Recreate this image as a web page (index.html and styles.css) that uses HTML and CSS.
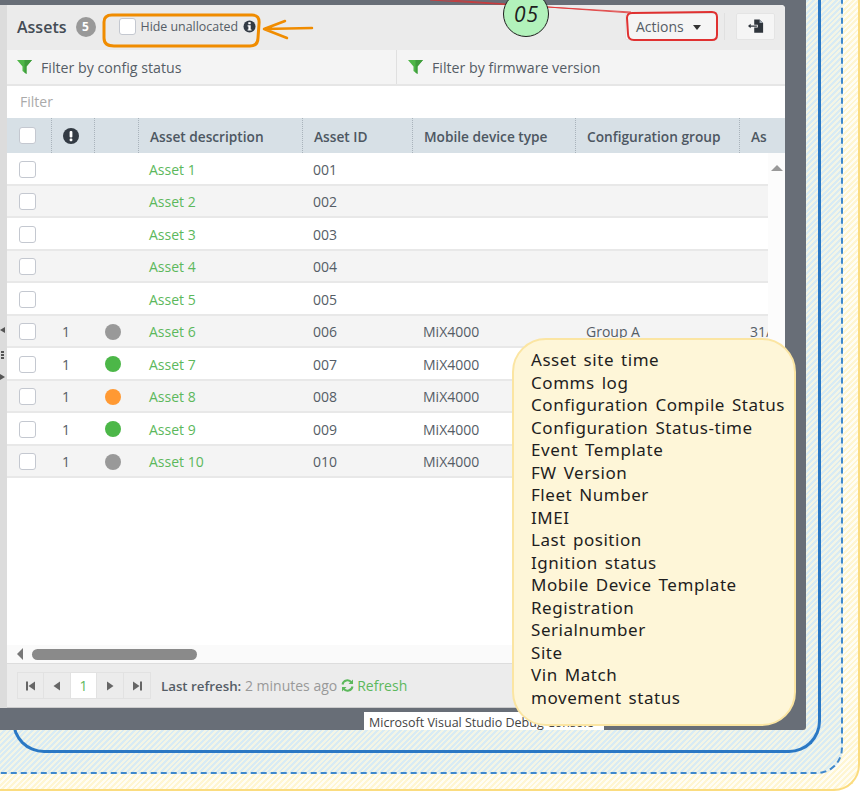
FILE: index.html
```html
<!DOCTYPE html>
<html lang="en">
<head>
    <meta charset="UTF-8">
    <title>Assets</title>
    <link rel="stylesheet" href="styles.css">
</head>
<body>
<div class="zone-yellow">
<div class="zone-blue">
<div class="zone-line">
<div class="frame">
    <div class="gutter">
        <svg width="7" height="60" viewBox="0 0 7 60"><path d="M0 3L5 0V6Z" fill="#555"/><rect x="1" y="24" width="3" height="2" fill="#555"/><rect x="1" y="27" width="3" height="2" fill="#555"/><rect x="1" y="30" width="3" height="2" fill="#555"/><path d="M0 47V53L5 50Z" fill="#555"/></svg>
    </div>
    <section class="panel">
        <header class="titlebar">
            <h1>Assets</h1>
            <span class="badge">5</span>
            <label class="hide-check">
                <span class="check"></span>
                <span>Hide unallocated</span>
                <svg width="13" height="13" viewBox="0 0 13 13"><circle cx="6.5" cy="6.5" r="6" fill="#333b44"/><rect x="5.3" y="2.2" width="2.4" height="2" fill="#fff"/><path d="M4.6 5.3H7.7V9.4H8.6V10.6H4.6V9.4H5.4V6.5H4.6Z" fill="#fff"/></svg>
            </label>
            <div class="title-actions">
                <button class="btn btn-actions">Actions <i class="caret"></i></button>
                <span class="sep"></span>
                <button class="btn btn-export">
                    <svg width="16" height="15" viewBox="0 0 18 16"><path d="M7 0H13L17 4V15H7V9H11V6H7Z" fill="#2f353c"/><path d="M13 0L17 4H13Z" fill="#9aa3ad"/><path d="M0 7.5L3 5V6.8H10V8.2H3V10Z" fill="#2f353c"/></svg>
                </button>
            </div>
        </header>

        <div class="filters">
            <div class="filter-cell filter-cell-a">
                <svg class="funnel" width="15" height="14" viewBox="0 0 15 14"><path d="M0 0H15L9.5 6.5V14L5.5 11V6.5Z" fill="#4fb648"/><path d="M7.5 0H15L9.5 6.5V14L7.5 12.5Z" fill="#3f9c3c"/></svg>
                Filter by config status
            </div>
            <div class="filter-cell">
                <svg class="funnel" width="15" height="14" viewBox="0 0 15 14"><path d="M0 0H15L9.5 6.5V14L5.5 11V6.5Z" fill="#4fb648"/><path d="M7.5 0H15L9.5 6.5V14L7.5 12.5Z" fill="#3f9c3c"/></svg>
                Filter by firmware version
            </div>
        </div>

        <div class="filter-input">Filter</div>

        <div class="row row-head">
            <div class="cell"><span class="check"></span></div>
            <div class="cell"><svg width="16" height="16" viewBox="0 0 16 16"><circle cx="8" cy="8" r="8" fill="#333b44"/><rect x="6.6" y="3" width="2.8" height="6.4" rx="1" fill="#fff"/><rect x="6.6" y="10.6" width="2.8" height="2.6" rx="1" fill="#fff"/></svg></div>
            <div class="cell"></div>
            <div class="cell">Asset description</div>
            <div class="cell">Asset ID</div>
            <div class="cell">Mobile device type</div>
            <div class="cell">Configuration group</div>
            <div class="cell">As</div>
        </div>

        <div class="table-body">
            <div class="rows">
                <div class="row"><div class="cell"><span class="check"></span></div><div class="cell"></div><div class="cell"></div><div class="cell link">Asset 1</div><div class="cell">001</div><div class="cell"></div><div class="cell"></div><div class="cell"></div></div>
                <div class="row row-alt"><div class="cell"><span class="check"></span></div><div class="cell"></div><div class="cell"></div><div class="cell link">Asset 2</div><div class="cell">002</div><div class="cell"></div><div class="cell"></div><div class="cell"></div></div>
                <div class="row"><div class="cell"><span class="check"></span></div><div class="cell"></div><div class="cell"></div><div class="cell link">Asset 3</div><div class="cell">003</div><div class="cell"></div><div class="cell"></div><div class="cell"></div></div>
                <div class="row row-alt"><div class="cell"><span class="check"></span></div><div class="cell"></div><div class="cell"></div><div class="cell link">Asset 4</div><div class="cell">004</div><div class="cell"></div><div class="cell"></div><div class="cell"></div></div>
                <div class="row"><div class="cell"><span class="check"></span></div><div class="cell"></div><div class="cell"></div><div class="cell link">Asset 5</div><div class="cell">005</div><div class="cell"></div><div class="cell"></div><div class="cell"></div></div>
                <div class="row row-alt"><div class="cell"><span class="check"></span></div><div class="cell">1</div><div class="cell"><i class="dot dot-grey"></i></div><div class="cell link">Asset 6</div><div class="cell">006</div><div class="cell">MiX4000</div><div class="cell">Group A</div><div class="cell">31/</div></div>
                <div class="row"><div class="cell"><span class="check"></span></div><div class="cell">1</div><div class="cell"><i class="dot dot-green"></i></div><div class="cell link">Asset 7</div><div class="cell">007</div><div class="cell">MiX4000</div><div class="cell"></div><div class="cell"></div></div>
                <div class="row row-alt"><div class="cell"><span class="check"></span></div><div class="cell">1</div><div class="cell"><i class="dot dot-orange"></i></div><div class="cell link">Asset 8</div><div class="cell">008</div><div class="cell">MiX4000</div><div class="cell"></div><div class="cell"></div></div>
                <div class="row"><div class="cell"><span class="check"></span></div><div class="cell">1</div><div class="cell"><i class="dot dot-green"></i></div><div class="cell link">Asset 9</div><div class="cell">009</div><div class="cell">MiX4000</div><div class="cell"></div><div class="cell"></div></div>
                <div class="row row-alt"><div class="cell"><span class="check"></span></div><div class="cell">1</div><div class="cell"><i class="dot dot-grey"></i></div><div class="cell link">Asset 10</div><div class="cell">010</div><div class="cell">MiX4000</div><div class="cell"></div><div class="cell"></div></div>
            </div>
            <div class="v-rail"><i class="arrow-up"></i></div>
        </div>

        <div class="h-scroll"><i class="arrow-left"></i><span class="h-thumb"></span></div>

        <footer class="pager-bar">
            <div class="pager">
                <span class="page-btn"><svg width="10" height="10" viewBox="0 0 10 10"><rect x="0" y="0.5" width="2" height="9" fill="#666"/><path d="M9 0.5V9.5L2.5 5Z" fill="#666"/></svg></span>
                <span class="page-btn"><svg width="8" height="10" viewBox="0 0 8 10"><path d="M7 0.5V9.5L0.5 5Z" fill="#666"/></svg></span>
                <span class="page-btn page-current">1</span>
                <span class="page-btn"><svg width="8" height="10" viewBox="0 0 8 10"><path d="M1 0.5V9.5L7.5 5Z" fill="#666"/></svg></span>
                <span class="page-btn"><svg width="10" height="10" viewBox="0 0 10 10"><path d="M1 0.5V9.5L7.5 5Z" fill="#666"/><rect x="8" y="0.5" width="2" height="9" fill="#666"/></svg></span>
            </div>
            <span class="refresh-text"><b>Last refresh:</b> <span class="muted">2 minutes ago</span></span>
            <span class="refresh-link">
                <svg width="13" height="13" viewBox="0 0 13 13" fill="none" stroke="#5cb85c" stroke-width="2"><path d="M1.5 5.5A5 5 0 0 1 10.5 3.5"/><path d="M11.5 7.5A5 5 0 0 1 2.5 9.5"/><path d="M12 0.5V5H7.5Z" fill="#5cb85c" stroke="none"/><path d="M1 12.5V8H5.5Z" fill="#5cb85c" stroke="none"/></svg>
                Refresh
            </span>
        </footer>
    </section>
</div>
</div>
</div>
</div>

<div class="taskbar-tip">Microsoft Visual Studio Debug Console</div>

<!-- sketch markup on top of the screenshot -->
<svg class="markup" width="863" height="793" viewBox="0 0 863 793" fill="none">
    <path d="M104 22Q104 15 112 15L252 15Q260 15 259 24L258 38Q258 46 250 46L114 46Q104 46 104 38Z" stroke="#f08c00" stroke-width="3"/>
    <path d="M312 28L264 29M264 29L285 21M264 29L287 38" stroke="#f08c00" stroke-width="2.5" stroke-linecap="round"/>
    <path d="M430 0L631 12M450 0L631 13" stroke="#e03131" stroke-width="0.8"/>
    <path d="M632 13L712 12Q717 12 717 17L717 35Q717 40 712 40L634 40Q628 40 628 34L627 18Q627 13 632 13Z" stroke="#e03131" stroke-width="2"/>
    <circle cx="526" cy="14" r="22.5" fill="#b2f2bb" stroke="#1e1e1e" stroke-width="1"/>
</svg>
<div class="step-no">05</div>

<aside class="note">
    <p>Asset site time</p>
    <p>Comms log</p>
    <p>Configuration Compile Status</p>
    <p>Configuration Status-time</p>
    <p>Event Template</p>
    <p>FW Version</p>
    <p>Fleet Number</p>
    <p>IMEI</p>
    <p>Last position</p>
    <p>Ignition status</p>
    <p>Mobile Device Template</p>
    <p>Registration</p>
    <p>Serialnumber</p>
    <p>Site</p>
    <p>Vin Match</p>
    <p>movement status</p>
</aside>
</body>
</html>
```

FILE: styles.css
```css
* { box-sizing: border-box; margin: 0; padding: 0 }
html, body { height: 793px; overflow: hidden; background: #fff }
body { position: relative; font-family: "Open Sans", sans-serif; font-size: 14px; color: #555d66 }

/* hatched canvas behind the screenshot */
.zone-yellow {
    width: 860px; height: 791px; padding: 0 15px 15px 0;
    border-right: 2px solid #fbdc7f; border-bottom: 2px solid #fbdc7f; border-bottom-right-radius: 26px;
    background: repeating-linear-gradient(-45deg, #fff6d2 0, #fff6d2 2px, #fffdf4 2px, #fffdf4 4px);
}
.zone-blue {
    height: 100%; padding: 0 20px 19px 0;
    border-right: 2px dashed #3f88cc; border-bottom: 2px dashed #3f88cc; border-bottom-right-radius: 26px;
    background: repeating-linear-gradient(-45deg, #d8ebf4 0, #d8ebf4 2px, #f3f5e6 2px, #f3f5e6 4px);
}
.zone-line {
    height: 100%; margin-left: 12px; padding: 0 12px 18px 0;
    border-left: 3px solid #2a78c4; border-right: 3px solid #2a78c4; border-bottom: 3px solid #2a78c4;
    border-radius: 0 0 32px 32px;
}
.frame {
    display: flex; height: 730px; margin-left: -15px; padding: 5px 21px 22px 0;
    background: #686e77; border-bottom-right-radius: 3px;
}

.gutter { width: 7px; padding-top: 322px; background: #dcdcdc }
.gutter svg { display: block }

.panel { flex: 1; display: flex; flex-direction: column; min-width: 0; background: #fff; border-top-right-radius: 4px; overflow: hidden }

.titlebar { display: flex; align-items: center; height: 45px; padding: 0 10px 2px 10px; background: #ebebeb; flex: none }
.titlebar h1 { font-size: 16px; font-weight: 600; color: #444c55 }
.badge { width: 20px; height: 20px; margin-left: 9px; border-radius: 50%; background: #999; color: #fff; font-size: 12px; font-weight: 700; line-height: 20px; text-align: center }
.hide-check { display: flex; align-items: center; margin-left: 23px; font-size: 12.4px; color: #555d66 }
.hide-check .check { margin-right: 5px }
.hide-check svg { margin-left: 5px }
.title-actions { display: flex; align-items: center; margin-left: auto }
.btn { height: 27px; border: 1px solid #e4e4e4; border-radius: 2px; background: #f5f5f5; font-family: inherit; font-size: 14px; color: #555d66 }
.btn-actions { width: 92px; padding-left: 10px; text-align: left }
.caret { display: inline-block; margin-left: 6px; vertical-align: 2px; border-top: 5px solid #333; border-left: 4.5px solid transparent; border-right: 4.5px solid transparent }
.sep { width: 1px; height: 27px; margin: 0 11px 0 7px; background: #e0e0e0 }
.btn-export { width: 39px; display: flex; align-items: center; justify-content: center }

.check { display: block; width: 17px; height: 17px; background: #fff; border: 1px solid #c4c8d0; border-radius: 3px }

.filters { display: flex; height: 36px; flex: none; background: #f4f4f4; border-bottom: 2px solid #e6e6e6 }
.filter-cell { display: flex; align-items: center; padding-left: 11px; font-size: 14.2px; color: #555d66; flex: 1 }
.filter-cell-a { flex: none; width: 390px; padding-left: 10px; border-right: 1px solid #e0e0e0 }
.funnel { margin-right: 9px }

.filter-input { height: 32px; flex: none; padding: 6px 0 0 13px; color: #aaa; font-size: 14px }

.row { display: grid; grid-template-columns: 44px 43px 44px 164px 110px 163px 164px 46px; height: 32.5px; border-bottom: 2px solid #e8e8e8; overflow: hidden; white-space: nowrap }
.cell { display: flex; align-items: center; padding-left: 11px; min-width: 0 }
.cell:first-child { padding-left: 12px }
.rows .cell { padding-top: 2px }
.row-head { height: 35px; flex: none; width: 100%; background: #d7e0e6; border: none; font-size: 13.7px; font-weight: 600; color: #4d5762 }
.row-head .cell:nth-child(n+4) { padding-top: 2px }
.row-head .cell + .cell { border-left: 1px dotted #a9b3bb }
.row-alt { background: #f4f4f4 }
.link { color: #5cb85c }

.dot { display: block; width: 16px; height: 16px; border-radius: 50% }
.dot-grey { background: #999 }
.dot-green { background: #4cb748 }
.dot-orange { background: #ff9933 }

.table-body { flex: 1; display: flex; min-height: 0; overflow: hidden }
.rows { width: 761px; flex: none; overflow: hidden }
.rows .row { width: 761px; grid-template-columns: 44px 43px 44px 164px 110px 163px 164px 29px }
.v-rail { flex: 1; padding: 12px 0 0 3px; background: #fcfcfc }
.arrow-up { display: block; width: 0; border-bottom: 6px solid #999; border-left: 6px solid transparent; border-right: 6px solid transparent }

.h-scroll { display: flex; align-items: center; height: 18px; flex: none; padding-left: 10px; background: #fafafa }
.arrow-left { display: block; border-right: 6px solid #777; border-top: 6px solid transparent; border-bottom: 6px solid transparent }
.h-thumb { display: block; width: 165px; height: 11px; margin-left: 9px; border-radius: 6px; background: #8a8a8a }

.pager-bar { display: flex; align-items: center; height: 45px; flex: none; padding-left: 10px; background: #ececec; border-top: 1px solid #ddd; border-bottom: 1px solid #ccc; font-size: 14px }
.pager { display: flex; height: 27px; border: 1px solid #e2e2e2; margin-right: 10px }
.page-btn { display: flex; align-items: center; justify-content: center; width: 26.4px; border-right: 1px solid #e2e2e2 }
.page-btn:last-child { border-right: none }
.page-current { background: #fff; color: #5cb85c }
.refresh-text b { font-size: 13.3px; font-weight: 600 }
.muted { color: #999 }
.refresh-link { display: flex; align-items: center; gap: 3px; margin-left: 4px; color: #5cb85c }

/* things lying over the screenshot */
.taskbar-tip { position: absolute; left: 364px; top: 712px; width: 240px; height: 18px; padding-left: 5px; background: #fff; font-size: 12.5px; line-height: 21px; color: #444; white-space: nowrap; overflow: hidden }
.markup { position: absolute; left: 0; top: 0 }
.step-no { position: absolute; left: 514px; top: 0; font-size: 21px; font-style: italic; color: #1e1e1e; letter-spacing: 1px }
.note {
    position: absolute; left: 512px; top: 338px; width: 284px; height: 388px; padding: 9px 0 0 17px;
    background: #fef6d8; border: 2px solid #fbe5a2; border-radius: 34px;
    font-family: "Noto Sans", sans-serif; font-size: 17px; line-height: 22.5px; letter-spacing: 0.55px; word-spacing: 2px; color: #1e1e1e; white-space: nowrap;
}
```
